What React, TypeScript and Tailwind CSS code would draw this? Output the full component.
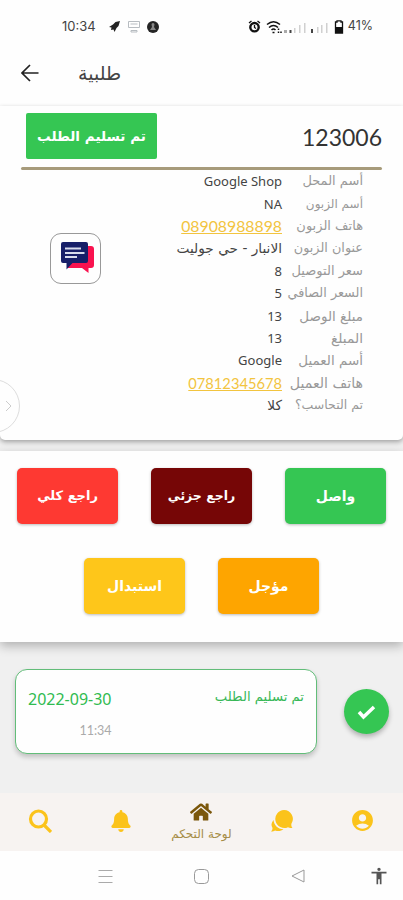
import { FaHome, FaBell } from "react-icons/fa";
import { MdAccountCircle, MdAccessibility } from "react-icons/md";

const details = [
  { label: "أسم المحل", value: "Google Shop", labelClass: "text-[13px]" },
  { label: "أسم الزبون", value: "NA", labelClass: "text-[12px]" },
  { label: "هاتف الزبون", value: "08908988898", phone: "text-[15.8px]", labelClass: "text-[13px]" },
  { label: "عنوان الزبون", value: "الانبار - حي جوليت", arabic: true, labelClass: "text-[12.8px]" },
  { label: "سعر التوصيل", value: "8", labelClass: "text-[13px]" },
  { label: "السعر الصافي", value: "5", labelClass: "text-[12.8px]" },
  { label: "مبلغ الوصل", value: "13", labelClass: "text-[13.5px]" },
  { label: "المبلغ", value: "13", labelClass: "text-[13.8px]" },
  { label: "أسم العميل", value: "Google", labelClass: "text-[13.5px]" },
  { label: "هاتف العميل", value: "07812345678", phone: "text-[14.7px]", labelClass: "text-[14.2px]" },
  { label: "تم التحاسب؟", value: "كلا", arabic: true, labelClass: "text-[12.5px]" },
];

const actions = [
  { label: "واصل", color: "bg-[#35c653]", size: "text-[14px]" },
  { label: "راجع جزئي", color: "bg-[#760606]", size: "text-[12.5px]" },
  { label: "راجع كلي", color: "bg-[#fe3932]", size: "text-[13px]" },
  { label: "مؤجل", color: "bg-[#fea500]", size: "text-[14px]" },
  { label: "استبدال", color: "bg-[#fec61a]", size: "text-[14px]" },
];

function StatusBar() {
  return (
    <div className="flex h-[46px] items-center pt-[7px] pr-[30px] pl-[62px] font-['Inter',sans-serif] text-[13px] text-[#444]">
      <span className="w-[46px]">10:34</span>
      <svg className="size-[13px]" viewBox="0 0 13 13" fill="#222">
        <path d="M12 1 10.500 6 8.500 8 6.500 12 5.500 9.500 3 10 3.500 7.500 1 7 5 4.500 7.500 2z" />
      </svg>
      <svg className="ml-[6px] h-[13px] w-[14px]" viewBox="0 0 14 13" fill="none" stroke="#b7bcc1">
        <path d="M1.500 1.500h11v6h-11zM3.500 4h7M4 10.500h6v1.500H4z" />
      </svg>
      <svg className="ml-[5px] size-[14px]" viewBox="0 0 14 14">
        <circle cx="7" cy="7" r="6" fill="#252525" />
        <path d="M7 3a1.500 1.500 0 0 0-1.500 1.500L6 7l-2 3h6L8 7l.5-2.500A1.500 1.500 0 0 0 7 3z" fill="#888" />
      </svg>
      <div className="ml-auto flex items-center">
        <svg className="size-[13px]" viewBox="0 0 13 13" fill="none" stroke="#111">
          <circle cx="6.500" cy="7.200" r="4.200" strokeWidth="2.400" />
          <path d="M1 3 3.500 1M12 3 9.500 1M6.500 5v2.500L8 8.500" strokeWidth="1.300" />
        </svg>
        <svg className="ml-[5px] h-[14px] w-[17px]" viewBox="0 0 17 14" fill="none" stroke="#111" strokeWidth="1.500">
          <path d="M1 4.500Q7.500-1 14 4.500M3 7.500Q7.500 3.500 12 7.500M5.500 10Q7.500 8 9.500 10" />
          <path d="M6.500 12.500h2M12.500 8.500v1.500M12.500 11.500V13M15 11.500V13" />
        </svg>
        <svg className="h-[14px] w-[46px]" viewBox="0 0 46 14" fill="#d0d0d0">
          <path d="M11 8h1.500v5H11zM16 5h1.500v8H16zM21 3h1.500v10H21zM34 7h1.500v6H34zM38 5h1.500v8H38zM43 3h1.500v10H43z" />
          <path d="M1 10h3v3H1z" fill="#aaa" />
          <path d="M6.500 10h2v3h-2zM28 9h2v4h-2z" fill="#444" />
        </svg>
        <svg className="ml-[5px] h-[14px] w-[10px]" viewBox="0 0 10 14">
          <path d="M3 2V.8h4V2h1.500v11h-7V2z" fill="none" stroke="#111" strokeWidth="1.300" />
          <path d="M1.500 7h7v6h-7z" fill="#111" />
        </svg>
        <span className="ml-[4px] text-[12.500px]">41%</span>
      </div>
    </div>
  );
}

function ChatIcon() {
  return (
    <svg className="mb-[2px] ml-[3px] h-[33px] w-[35px]" viewBox="0 0 35 33">
      <path d="M8 5h23a3 3 0 0 1 3 3v16a3 3 0 0 1-3 3h-2.500v5L22 27H8z" fill="#f9124f" />
      <path d="M3 1h23a2 2 0 0 1 2 2v17a2 2 0 0 1-2 2H12.500L6.500 28.500V22H3a2 2 0 0 1-2-2V3a2 2 0 0 1 2-2z" fill="#171f69" />
      <path d="M5 7.500h16M5 12h19.500M5 16h12" stroke="#d8dced" strokeWidth="2.200" />
    </svg>
  );
}

function OrderCard() {
  return (
    <section className="relative z-10 h-[334px] rounded-b-[5px] bg-[#fefefe] px-[21px] shadow-[0_2px_5px_#0005]">
      <div className="flex h-[61px] items-start justify-between pt-[7px] pl-[5px]">
        <span
          dir="rtl"
          className="flex h-[46px] w-[131px] items-center justify-center rounded-[2px] bg-[#35c653] text-[13.6px] font-bold whitespace-nowrap text-white"
        >
          تم تسليم الطلب
        </span>
        <span className="pt-[6px] font-['Lato',sans-serif] text-[23px] leading-[36px] text-[#333]">123006</span>
      </div>
      <div className="h-[3px] rounded-full bg-[#a79b7b]" />
      <div className="flex justify-between">
        <div className="mt-[63px] ml-[29px] flex size-[51px] items-center justify-center rounded-[11px] border border-[#999]">
          <ChatIcon />
        </div>
        <dl dir="rtl" className="pr-[19px]">
          {details.map((row) => (
            <div key={row.label} className="flex h-[22.4px] items-center leading-[22px] whitespace-nowrap">
              <dt className={`w-[81px] text-[#999] ${row.labelClass}`}>{row.label}</dt>
              <dd
                className={
                  row.phone
                    ? `font-['Lato',sans-serif] text-[#f2c43f] underline ${row.phone}`
                    : row.arabic
                      ? "text-[13.7px] text-[#444]"
                      : "font-['Noto_Sans',sans-serif] text-[13px] text-[#444]"
                }
              >
                {row.value}
              </dd>
            </div>
          ))}
        </dl>
      </div>
      <div className="absolute top-[273px] -left-[34px] flex size-[54px] items-center justify-end rounded-full border border-[#ddd] bg-[#fefefe] pr-[7px]">
        <svg className="h-[12px] w-[7px]" viewBox="0 0 7 12" fill="none" stroke="#ccc">
          <path d="m1 1 5 5-5 5" />
        </svg>
      </div>
    </section>
  );
}

function Actions() {
  return (
    <section
      dir="rtl"
      className="mt-[11px] flex h-[191px] flex-wrap content-start justify-center gap-x-[33px] gap-y-[34px] bg-[#fefefe] pt-[17px] shadow-[0_4px_10px_#0004]"
    >
      {actions.map((action) => (
        <button
          key={action.label}
          className={`h-[56px] w-[101px] rounded-[5px] font-bold text-white shadow-[0_1px_3px_#0004] ${action.size} ${action.color}`}
        >
          {action.label}
        </button>
      ))}
    </section>
  );
}

function Timeline() {
  return (
    <section dir="rtl" className="flex h-[151px] items-start justify-between pt-[27px] pr-[14px] pl-[15px]">
      <div className="mt-[20px] flex size-[45px] items-center justify-center rounded-full bg-[#35c653] shadow-[0_3px_5px_#0004]">
        <svg className="h-[16px] w-[19px]" viewBox="0 0 19 16" fill="none" stroke="white" strokeWidth="3.500">
          <path d="m2 8 4.500 5L17 3" />
        </svg>
      </div>
      <div className="flex h-[85px] w-[302px] justify-between rounded-[12px] border border-[#62bd79] bg-[#fefefe] px-[12px] pt-[16px] shadow-[0_3px_5px_#0003]">
        <span className="text-[13.2px] leading-[22px] text-[#37b857]">تم تسليم الطلب</span>
        <div dir="ltr" className="flex flex-col items-end">
          <span className="font-['Noto_Sans',sans-serif] text-[16px] leading-[26px] text-[#30bb50]">2022-09-30</span>
          <span className="mt-[8px] font-['Lato',sans-serif] text-[12.5px] leading-[22px] text-[#aaa]">11:34</span>
        </div>
      </div>
    </section>
  );
}

function BottomNav() {
  return (
    <nav className="grid h-[58px] grid-cols-5 justify-items-center bg-[#f7f3f1] text-[#fbc31b]">
      <svg className="mt-[16px] size-[24px]" viewBox="0 0 24 24" fill="none" stroke="currentColor" strokeWidth="3.200">
        <circle cx="10.500" cy="10" r="8" />
        <path d="m16 16 7 7" />
      </svg>
      <FaBell className="mt-[17px] size-[22px]" />
      <div className="flex w-[62px] flex-col items-center text-[#7b570b]">
        <FaHome className="mt-[8px] size-[22px]" />
        <span dir="rtl" className="text-[12px] leading-[22px] whitespace-nowrap text-[#a58c45]">لوحة التحكم</span>
      </div>
      <svg className="mt-[16px] size-[24px]" viewBox="0 0 24 24" fill="currentColor">
        <path d="M14 1a9 9 0 1 0 4 17.200c2 .8 3 .8 4.500.8-1-1.200-1.200-2-1.200-4A9 9 0 0 0 14 1z" />
        <path d="M3.500 11c-2.500 3-2.500 5.500-1 8 0 1.500-.5 2.500-1.500 3.500 2 0 3-.3 4-1 3 1 6 .8 8.500-1.200C7.500 20 4 16 3.500 11z" />
      </svg>
      <MdAccountCircle className="mt-[15px] size-[25px]" />
    </nav>
  );
}

export default function App() {
  return (
    <div className="h-[900px] w-[403px] overflow-hidden bg-[#f0f0f0] font-['DejaVu_Sans',sans-serif]">
      <header className="h-[106px] bg-[#fefefe]">
        <StatusBar />
        <div className="flex h-[54px] items-center pl-[21px]">
          <svg className="size-[18px]" viewBox="0 0 18 18" fill="none" stroke="#222" strokeWidth="1.700">
            <path d="M17.500 9H1.500M9 1 1 9l8 8" />
          </svg>
          <h1 className="ml-[39px] text-[19px] text-[#444]">طلبية</h1>
        </div>
      </header>
      <OrderCard />
      <Actions />
      <Timeline />
      <BottomNav />
      <div className="flex h-[50px] items-center bg-[#fefefe]">
        <svg className="ml-[98px] h-[15px] w-[15px]" viewBox="0 0 15 15" stroke="#aaa">
          <path d="M.5 1.500h14M.5 7.500h14M.5 13.500h14" />
        </svg>
        <svg className="ml-[81px] size-[15px]" viewBox="0 0 15 15" fill="none" stroke="#999">
          <rect x=".5" y=".5" width="14" height="14" rx="4" />
        </svg>
        <svg className="ml-[82px] size-[14px]" viewBox="0 0 14 14" fill="none" stroke="#999">
          <path d="M13 1v12L1 7z" strokeLinejoin="round" />
        </svg>
        <MdAccessibility className="ml-[64px] size-[20px] text-[#555]" />
      </div>
    </div>
  );
}
